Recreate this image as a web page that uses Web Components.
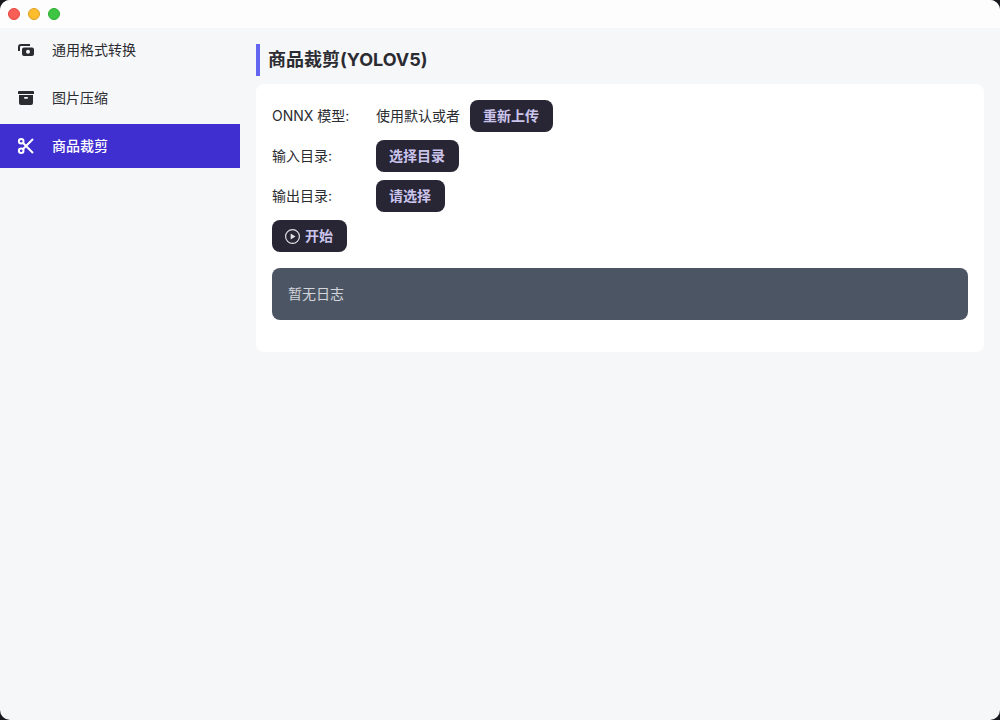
<!DOCTYPE html>
<html lang="zh-CN">
<head>
<meta charset="utf-8">
<title>商品裁剪</title>
<style>
  html { background: #17191f; height: 100%; }
  body {
    margin: 0;
    min-height: 100%;
    display: flex;
    font: 14px/20px Inter, "Noto Sans CJK SC", sans-serif;
    color: #2b2c31;
  }
</style>
</head>
<body>
<app-window>
  <nav-item slot="nav" icon="convert">通用格式转换</nav-item>
  <nav-item slot="nav" icon="archive">图片压缩</nav-item>
  <nav-item slot="nav" icon="scissors" active>商品裁剪</nav-item>
  <page-title>商品裁剪(YOLOV5)</page-title>
  <panel-card>
    <form-row label="ONNX 模型:"><span>使用默认或者</span><dark-button>重新上传</dark-button></form-row>
    <form-row label="输入目录:"><dark-button>选择目录</dark-button></form-row>
    <form-row label="输出目录:"><dark-button>请选择</dark-button></form-row>
    <dark-button icon="play">开始</dark-button>
    <log-box>暂无日志</log-box>
  </panel-card>
</app-window>

<script>
const icons = {
  convert: '<path d="M2 10V6a2 2 0 0 1 2-2H13" fill="none" stroke="currentColor" stroke-width="2"/><path fill="currentColor" fill-rule="evenodd" d="M7 6.500h8a2 2 0 0 1 2 2V13a2 2 0 0 1-2 2H7a2 2 0 0 1-2-2V8.500a2 2 0 0 1 2-2zm4 2.300a2 2 0 1 0 0 4 2 2 0 0 0 0-4z"/>',
  archive: '<path fill="currentColor" fill-rule="evenodd" d="M2 2h14a1 1 0 0 1 1 1v2H1V3a1 1 0 0 1 1-1zM2 6h14v8a2 2 0 0 1-2 2H4a2 2 0 0 1-2-2zm5.200 2v1.700h3.600V8z"/>',
  scissors: '<g fill="none" stroke="currentColor" stroke-width="2"><circle cx="4.200" cy="4.200" r="2.300"/><circle cx="4.200" cy="13.800" r="2.300"/><path d="M5.800 5.800L16 16M5.800 12.200L16 2"/></g>',
  play: '<circle cx="9" cy="9" r="8.300" fill="none" stroke="currentColor" stroke-width="1.400"/><path fill="currentColor" d="M6.800 5.300v7.400L12.600 9z"/>'
};
const svg = name => icons[name]
  ? `<svg viewBox="0 0 18 18" aria-hidden="true">${icons[name]}</svg>` : '';

function define(name, render) {
  customElements.define(name, class extends HTMLElement {
    constructor() {
      super();
      this.attachShadow({ mode: 'open' });
    }
    connectedCallback() {
      this.shadowRoot.innerHTML = render(this);
    }
  });
}

define('app-window', () => `
  <style>
    :host { flex: 1; display: flex; flex-direction: column; background: #f6f7f9; border-radius: 10px; overflow: hidden; }
    header { height: 28px; box-sizing: border-box; padding: 0 8px; display: flex; align-items: center; gap: 8px; background: #fdfdfd; }
    button { width: 12px; height: 12px; padding: 0; box-sizing: border-box; border: 1px solid #e2463f; border-radius: 50%; background: #f95e57; }
    .min { border-color: #dfa023; background: #fbbc2e; }
    .max { border-color: #2bac2f; background: #3ec544; }
    .body { flex: 1; display: flex; }
    nav { width: 240px; display: flex; flex-direction: column; gap: 4px; }
    main { flex: 1; min-width: 0; padding: 16px; display: flex; flex-direction: column; gap: 8px; }
  </style>
  <header>
    <button aria-label="关闭"></button>
    <button class="min" aria-label="最小化"></button>
    <button class="max" aria-label="最大化"></button>
  </header>
  <div class="body">
    <nav><slot name="nav"></slot></nav>
    <main><slot></slot></main>
  </div>`);

define('nav-item', el => `
  <style>
    :host { display: block; }
    a { display: flex; align-items: center; gap: 17px; height: 44px; padding: 0 17px; color: inherit; text-decoration: none; }
    :host([active]) a { background: #402fd0; color: #fff; font-weight: 500; }
    svg { width: 18px; height: 18px; flex: none; }
  </style>
  <a href="#">${svg(el.getAttribute('icon'))}<slot></slot></a>`);

define('page-title', () => `
  <style>
    :host { display: block; }
    h1 { margin: 0; border-left: 4px solid #6366f1; padding-left: 8px; font-size: 18px; line-height: 32px; font-weight: 700; }
  </style>
  <h1><slot></slot></h1>`);

define('panel-card', () => `
  <style>
    :host { display: flex; flex-direction: column; align-items: flex-start; gap: 8px; padding: 16px 16px 32px; background: #fff; border-radius: 8px; }
  </style>
  <slot></slot>`);

define('form-row', el => `
  <style>
    :host { display: flex; align-items: center; min-height: 32px; }
    .label { width: 104px; }
    .field { display: flex; align-items: center; gap: 10px; }
  </style>
  <div class="label">${el.getAttribute('label')}</div>
  <div class="field"><slot></slot></div>`);

define('dark-button', el => `
  <style>
    :host { display: block; }
    button { display: flex; align-items: center; gap: 5px; height: 32px; padding: 0 14px 0 13px; border: 0; border-radius: 8px; background: #282635; color: #cbc4ec; font: inherit; font-weight: 700; }
    svg { width: 15px; height: 15px; color: #e2e1e6; }
  </style>
  <button type="button">${svg(el.getAttribute('icon'))}<slot></slot></button>`);

define('log-box', () => `
  <style>
    :host { display: block; align-self: stretch; margin-top: 8px; padding: 16px; border-radius: 8px; background: #4c5564; color: #d3d6db; }
  </style>
  <slot></slot>`);
</script>
</body>
</html>
